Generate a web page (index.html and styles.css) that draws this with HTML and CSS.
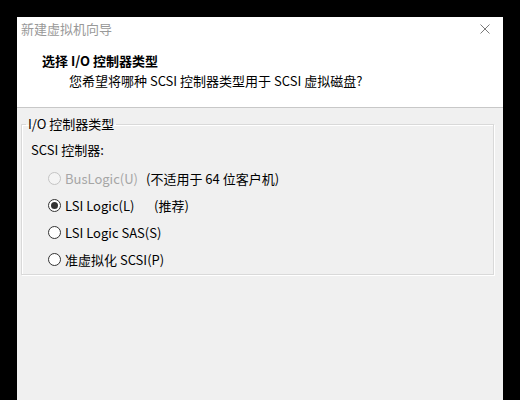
FILE: index.html
```html
<!DOCTYPE html>
<html>
<head>
    <title>新建虚拟机向导</title>
    <link rel="stylesheet" href="styles.css">
</head>
<body>
    <div class="window">
        <div class="header">
            <div class="titlebar">
                <span class="title">新建虚拟机向导</span>
                <svg class="close" width="10" height="10" viewBox="0 0 10 10">
                    <path d="M0.5 0.5 L9.5 9.5 M9.5 0.5 L0.5 9.5" stroke="#7a7a7a" stroke-width="1" fill="none"/>
                </svg>
            </div>
            <div class="heading">选择 I/O 控制器类型</div>
            <div class="subtitle">您希望将哪种 SCSI 控制器类型用于 SCSI 虚拟磁盘?</div>
        </div>

        <div class="content">
            <fieldset class="group">
                <legend>I/O 控制器类型</legend>
                <div class="group-label">SCSI 控制器:</div>
                <div class="option disabled">
                    <span class="radio"></span>
                    <span class="label label-bus">BusLogic(U)</span>
                    <span class="note">(不适用于 64 位客户机)</span>
                </div>
                <div class="option">
                    <span class="radio checked"></span>
                    <span class="label label-lsi">LSI Logic(L)</span>
                    <span class="note">(推荐)</span>
                </div>
                <div class="option">
                    <span class="radio"></span>
                    <span class="label">LSI Logic SAS(S)</span>
                </div>
                <div class="option">
                    <span class="radio"></span>
                    <span class="label">准虚拟化 SCSI(P)</span>
                </div>
            </fieldset>
        </div>
    </div>
</body>
</html>
```

FILE: styles.css
```css
body { margin: 0; background: #000; font-family: "Noto Sans CJK SC", "Liberation Sans", sans-serif; font-size: 13px; color: #000; }
.window { margin: 17px 0 0 17px; width: 486px; height: 383px; background: #f0f0f0; }
.header { background: #fff; padding-bottom: 16px; border-bottom: 1px solid #c8c8c8; }
.titlebar { display: flex; justify-content: space-between; align-items: center; height: 24px; padding: 0 13px 0 4px; }
.title { color: #999; line-height: 24px; }
.heading { font-weight: bold; line-height: 20px; margin-top: 10px; padding-left: 25px; }
.subtitle { line-height: 20px; padding-left: 52px; }
.content { padding: 7px 9px 0 4px; }
.group { margin: 0; padding: 0 0 1px 9px; border: 1px solid #d9d9d9; box-shadow: inset 1px 1px 0 #fff, 1px 1px 0 #fff; }
.group legend { padding: 0 2px; margin-left: -5px; line-height: 18px; }
.group-label { line-height: 20px; margin-top: 7px; }
.option { display: flex; align-items: center; height: 27px; padding-left: 17px; }
.group-label + .option { margin-top: 5px; }
.radio { width: 11px; height: 11px; border: 1px solid #333; border-radius: 50%; background: #fff; margin-right: 4px; position: relative; }
.radio.checked::after { content: ""; position: absolute; left: 2px; top: 2px; width: 7px; height: 7px; border-radius: 50%; background: #333; }
.label-bus { width: 81px; }
.label-lsi { width: 89px; }
.disabled { color: #a6a6a6; }
.disabled .radio { border-color: #c4c4c4; background: #f4f4f4; }
.note { color: #000; }
```
